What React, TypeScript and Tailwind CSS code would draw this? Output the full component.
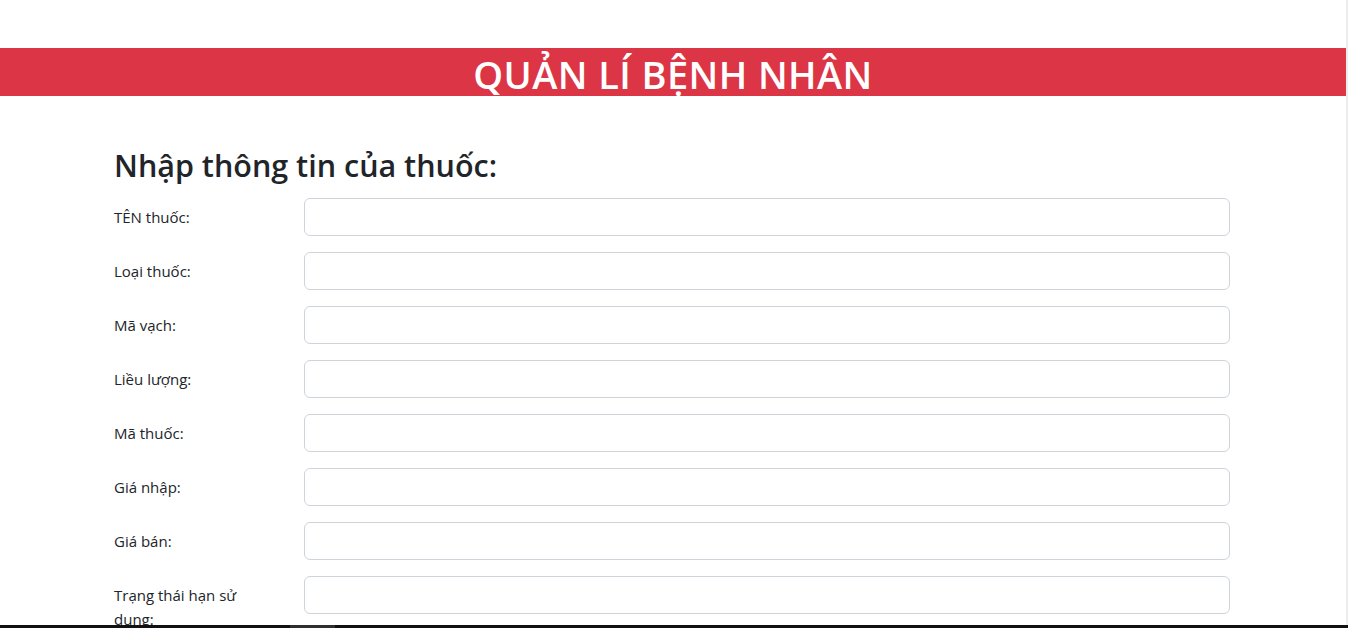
const fields = [
  'TÊN thuốc:',
  'Loại thuốc:',
  'Mã vạch:',
  'Liều lượng:',
  'Mã thuốc:',
  'Giá nhập:',
  'Giá bán:',
]

const App = () => {
  return (
    <div className="h-[628px] overflow-hidden flex flex-col bg-white font-['Open_Sans',sans-serif] text-[#212529]">
      <div className="flex flex-1 min-h-0">
        <div className="w-[1346px] pt-12">
          <div className="h-12 bg-[#dc3545] flex items-center justify-center">
            <h1 className="text-white text-[38px] font-semibold leading-none pt-[3px] tracking-[0.4px]">QUẢN LÍ BỆNH NHÂN</h1>
          </div>

          <div className="w-[1140px] ml-[102px] px-3 pt-[51px]">
            <h2 className="text-[30.5px] font-semibold leading-[1.2] mb-[14px]">Nhập thông tin của thuốc:</h2>

            <form className="flex flex-col gap-4">
              {fields.map((label) => (
                <div key={label} className="flex">
                  <label className="w-[190px] shrink-0 pt-[7px] text-[15px] leading-6">{label}</label>
                  <input
                    type="text"
                    className="flex-1 h-[38px] border border-[#ced4da] rounded-md bg-white"
                  />
                </div>
              ))}
              <div className="flex">
                <label className="w-[190px] shrink-0 pt-[7px] pr-12 text-[15px] leading-6">
                  Trạng thái hạn sử
                  <br />
                  dụng:
                </label>
                <input
                  type="text"
                  className="flex-1 h-[38px] border border-[#ced4da] rounded-md bg-white"
                />
              </div>
            </form>
          </div>
        </div>
        <div className="w-[2px] bg-[#ececec]" />
      </div>
      <div className="h-[3px] bg-[#111111] flex shrink-0">
        <div className="ml-[290px] w-[45px] bg-[#2e2e2e]" />
      </div>
    </div>
  )
}

export default App
